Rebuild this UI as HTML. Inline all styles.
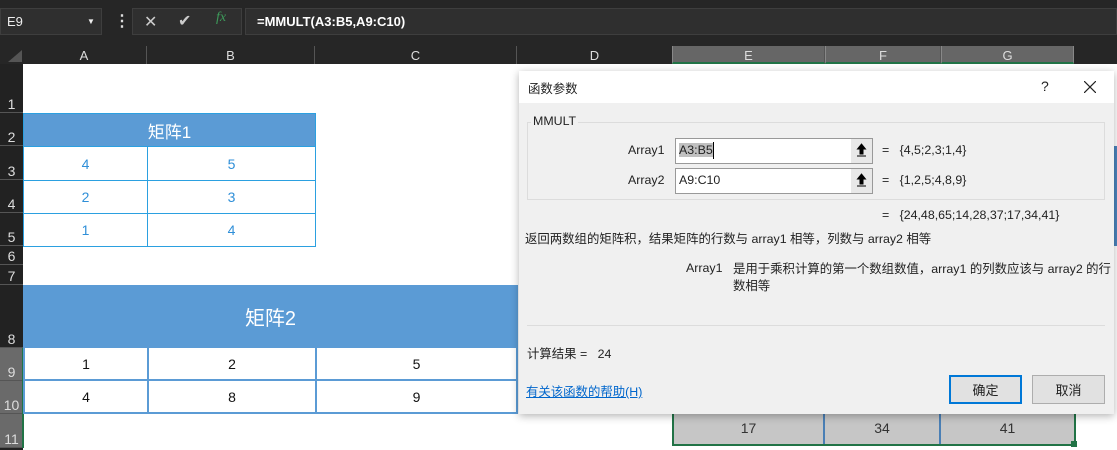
<!DOCTYPE html>
<html><head><meta charset="utf-8"><style>
*{margin:0;padding:0;box-sizing:border-box}
body{width:1117px;height:450px;overflow:hidden;background:#fff;position:relative;font-family:"Liberation Sans","Noto Sans CJK SC",sans-serif}
.a{position:absolute}
.ch{position:absolute;top:46px;height:18px;color:#ddd;font-size:13px;text-align:center;line-height:20px;border-right:1px solid #555}
.rh{position:absolute;left:0;width:23px;color:#ddd;font-size:14px;text-align:center;border-bottom:1px solid #555;display:flex;align-items:flex-end;justify-content:center;background:#222}
.c{position:absolute;display:flex;align-items:center;justify-content:center;font-size:14px}
.m1{color:#2f8fd8;border:1px solid #2ba0e0;background:#fff}
.m2{color:#111;border:2px solid #5b9bd5;background:#fff}
.d{font-size:12.4px;color:#222;position:absolute;white-space:nowrap}
</style></head><body>
<div class="a" style="left:0;top:0;width:1117px;height:64px;background:#262626"></div>
<div class="a" style="left:0;top:8px;width:102px;height:27px;background:#2f2f2f;border:1px solid #3e3e3e;color:#eee;font-size:13px;line-height:25px;padding-left:6px">E9<span style="position:absolute;left:86px;top:0;font-size:8px">▼</span></div>
<div class="a" style="left:114px;top:8px;color:#ddd;font-size:16px;line-height:27px;font-weight:bold">⋮</div>
<div class="a" style="left:132px;top:8px;width:110px;height:27px;background:#2f2f2f;border:1px solid #3e3e3e"></div>
<div class="a" style="left:144px;top:12px;color:#ccc;font-size:16px">✕</div>
<div class="a" style="left:178px;top:11px;color:#ccc;font-size:16px">✔</div>
<div class="a" style="left:216px;top:10px;color:#3d9a5a;font-size:14px;font-style:italic;font-family:'Liberation Serif',serif">fx</div>
<div class="a" style="left:245px;top:8px;width:872px;height:27px;background:#2f2f2f;border:1px solid #3e3e3e;color:#fff;font-size:13px;font-weight:bold;line-height:25px;padding-left:11px">=MMULT(A3:B5,A9:C10)</div>
<div class="a" style="left:8px;top:50px;width:0;height:0;border-left:14px solid transparent;border-bottom:12px solid #555"></div>
<div class="ch" style="left:22px;width:125px">A</div>
<div class="ch" style="left:147px;width:168px">B</div>
<div class="ch" style="left:315px;width:202px">C</div>
<div class="ch" style="left:517px;width:155px;border:0">D</div>
<div class="ch" style="left:672px;width:153px;background:#666;border-bottom:2px solid #217346;border-left:1px solid #888">E</div>
<div class="ch" style="left:825px;width:116px;background:#666;border-bottom:2px solid #217346;border-left:1px solid #888">F</div>
<div class="ch" style="left:941px;width:133px;background:#666;border-bottom:2px solid #217346;border-left:1px solid #888;border-right:1px solid #888">G</div>
<div class="a" style="left:0;top:64px;width:23px;height:386px;background:#222"></div>
<div class="rh" style="top:64px;height:49px">1</div>
<div class="rh" style="top:113px;height:33px">2</div>
<div class="rh" style="top:146px;height:34px">3</div>
<div class="rh" style="top:180px;height:33px">4</div>
<div class="rh" style="top:213px;height:33px">5</div>
<div class="rh" style="top:246px;height:19px">6</div>
<div class="rh" style="top:265px;height:20px">7</div>
<div class="rh" style="top:285px;height:63px">8</div>
<div class="rh" style="top:348px;height:33px;background:#6a6a6a">9</div>
<div class="rh" style="top:381px;height:33px;background:#6a6a6a">10</div>
<div class="rh" style="top:414px;height:34px;background:#6a6a6a">11</div>
<div class="a" style="left:22px;top:348px;width:2px;height:100px;background:#217346"></div>

<div class="c" style="left:23px;top:113px;width:293px;height:34px;background:#5b9bd5;color:#fff;font-size:17px;border:1px solid #2ba0e0">矩阵1</div>
<div class="c m1" style="left:23px;top:146px;width:125px;height:35px">4</div>
<div class="c m1" style="left:147px;top:146px;width:169px;height:35px">5</div>
<div class="c m1" style="left:23px;top:180px;width:125px;height:34px">2</div>
<div class="c m1" style="left:147px;top:180px;width:169px;height:34px">3</div>
<div class="c m1" style="left:23px;top:213px;width:125px;height:34px">1</div>
<div class="c m1" style="left:147px;top:213px;width:169px;height:34px">4</div>

<div class="c" style="left:23px;top:285px;width:495px;height:63px;background:#5b9bd5;color:#fff;font-size:20px">矩阵2</div>
<div class="c m2" style="left:23px;top:346px;width:126px;height:35px">1</div>
<div class="c m2" style="left:147px;top:346px;width:170px;height:35px">2</div>
<div class="c m2" style="left:315px;top:346px;width:203px;height:35px">5</div>
<div class="c m2" style="left:23px;top:379px;width:126px;height:35px">4</div>
<div class="c m2" style="left:147px;top:379px;width:170px;height:35px">8</div>
<div class="c m2" style="left:315px;top:379px;width:203px;height:35px">9</div>

<div class="a" style="left:672px;top:412px;width:404px;height:34px;background:#c6c6c6;border:2px solid #217346;border-top:0"></div>
<div class="c" style="left:674px;top:412px;width:151px;height:32px;color:#333;font-size:14px;border-right:2px solid #4a7fb5">17</div>
<div class="c" style="left:825px;top:412px;width:116px;height:32px;color:#333;font-size:14px;border-right:2px solid #4a7fb5">34</div>
<div class="c" style="left:941px;top:412px;width:133px;height:32px;color:#333;font-size:14px">41</div>
<div class="a" style="left:1071px;top:441px;width:6px;height:6px;background:#217346"></div>
<div class="a" style="left:1113px;top:146px;width:4px;height:100px;background:#4a84bd"></div>

<div class="a" style="left:519px;top:71px;width:595px;height:343px;background:#f0f0f0;box-shadow:0 2px 8px rgba(0,0,0,.3)"></div>
<div class="a" style="left:519px;top:71px;width:595px;height:32px;background:#fff"></div>
<div class="d" style="left:528px;top:79px">函数参数</div>
<div class="d" style="left:1041px;top:78px;font-size:14px">?</div>
<svg class="a" style="left:1084px;top:81px" width="12" height="12"><path d="M0 0L12 12M12 0L0 12" stroke="#222" stroke-width="1.2"/></svg>
<div class="a" style="left:527px;top:122px;width:578px;height:78px;border:1px solid #dcdcdc"></div>
<div class="d" style="left:531px;top:114px;background:#f0f0f0;padding:0 2px">MMULT</div>
<div class="d" style="left:628px;top:143px">Array1</div>
<div class="a" style="left:675px;top:138px;width:198px;height:26px;background:#fff;border:1px solid #999"></div>
<div class="d" style="left:679px;top:143px;background:#c0c0c0">A3:B5</div>
<div class="a" style="left:713px;top:142px;width:1px;height:17px;background:#000"></div>
<div class="a" style="left:851px;top:139px;width:21px;height:24px;background:#e8e8e8"><svg width="21" height="24"><path d="M10.5 5L6.5 10H9V15H12V10H14.5Z M6 17H15" fill="#000" stroke="#000" stroke-width="1"/></svg></div>
<div class="d" style="left:882px;top:143px">=&nbsp;&nbsp; {4,5;2,3;1,4}</div>
<div class="d" style="left:628px;top:173px">Array2</div>
<div class="a" style="left:675px;top:168px;width:198px;height:26px;background:#fff;border:1px solid #999"></div>
<div class="d" style="left:679px;top:173px">A9:C10</div>
<div class="a" style="left:851px;top:169px;width:21px;height:24px;background:#e8e8e8"><svg width="21" height="24"><path d="M10.5 5L6.5 10H9V15H12V10H14.5Z M6 17H15" fill="#000" stroke="#000" stroke-width="1"/></svg></div>
<div class="d" style="left:882px;top:173px">=&nbsp;&nbsp; {1,2,5;4,8,9}</div>
<div class="d" style="left:882px;top:208px">=&nbsp;&nbsp; {24,48,65;14,28,37;17,34,41}</div>
<div class="d" style="left:525px;top:229px">返回两数组的矩阵积，结果矩阵的行数与 array1 相等，列数与 array2 相等</div>
<div class="d" style="left:686px;top:261px">Array1</div>
<div class="d" style="left:733px;top:261px;line-height:17px">是用于乘积计算的第一个数组数值，array1 的列数应该与 array2 的行<br>数相等</div>
<div class="a" style="left:527px;top:325px;width:578px;height:1px;background:#dcdcdc"></div>
<div class="d" style="left:527px;top:344px">计算结果 =&nbsp;&nbsp; 24</div>
<div class="d" style="left:526px;top:382px;color:#0066cc;text-decoration:underline">有关该函数的帮助(H)</div>
<div class="c" style="left:949px;top:375px;width:73px;height:29px;background:#e1e1e1;border:2px solid #0078d7;font-size:13px;color:#222">确定</div>
<div class="c" style="left:1032px;top:375px;width:73px;height:29px;background:#e1e1e1;border:1px solid #adadad;font-size:13px;color:#222">取消</div>
</body></html>
